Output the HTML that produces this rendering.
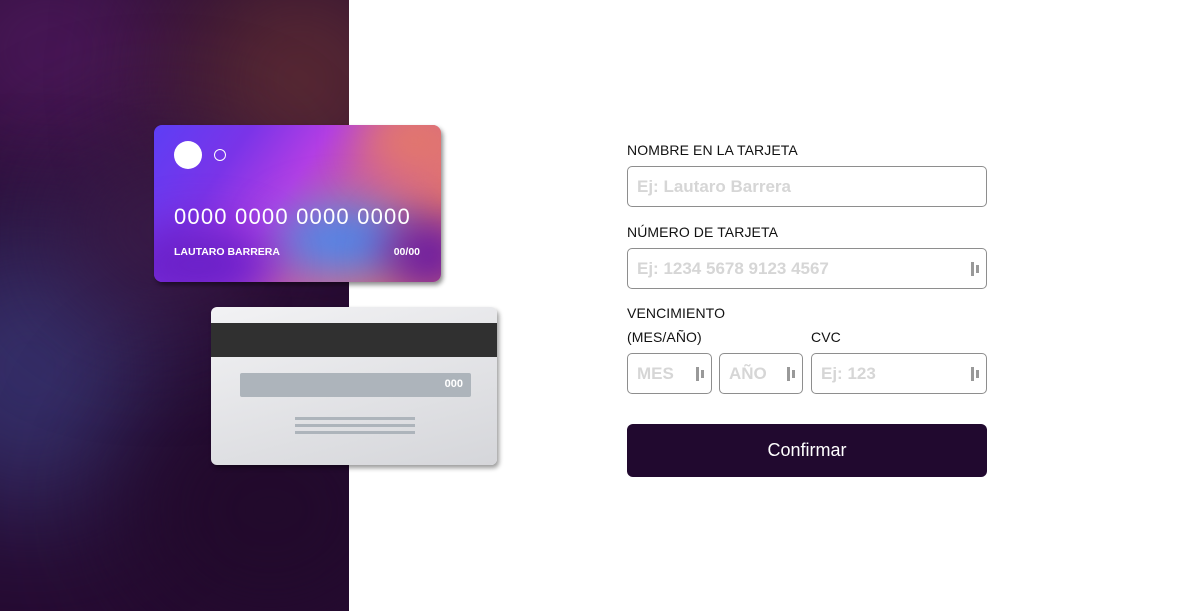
<!DOCTYPE html>
<html><head><meta charset="utf-8"><style>
*{box-sizing:border-box;margin:0;padding:0}
body{width:1178px;height:611px;background:#fff;font-family:"Liberation Sans",sans-serif;position:relative;overflow:hidden}
.left{position:absolute;left:0;top:0;width:349px;height:611px;background:#260b32;overflow:hidden}
.blob{position:absolute;border-radius:50%;filter:blur(60px)}
.front{position:absolute;left:154px;top:125px;width:287px;height:157px;border-radius:8px;overflow:hidden;box-shadow:2px 3px 5px rgba(0,0,0,.45);background:linear-gradient(125deg,#5d3ef5 0%,#7a34e8 25%,#b23ee4 45%,#c85aa8 60%,#e27470 85%)}
.front .g{position:absolute;border-radius:50%;filter:blur(22px)}
.back{position:absolute;left:211px;top:307px;width:286px;height:158px;border-radius:6px;overflow:hidden;box-shadow:2px 3px 5px rgba(0,0,0,.4);background:linear-gradient(165deg,#f2f2f4,#d5d6da)}
label{position:absolute;font-size:14px;color:#111;letter-spacing:.1px;font-weight:500}
.in{position:absolute;border:1px solid #8e8e8e;border-radius:5px;height:41px;font-size:17px;color:#d6d6d6;padding:10px 9px;font-weight:bold}
.ic{position:absolute;right:5px;top:13px;width:10px;height:14px}
.ic i{position:absolute;background:#999;width:3px}
</style></head><body>
<div class="left">
 <div class="blob" style="left:-80px;top:-60px;width:260px;height:220px;background:#4a1858"></div>
 <div class="blob" style="left:180px;top:-40px;width:240px;height:240px;background:#5a2a33"></div>
 <div class="blob" style="left:-100px;top:230px;width:260px;height:280px;background:#35306a"></div>
 <div class="blob" style="left:120px;top:380px;width:300px;height:260px;background:#220a2c"></div>
 <div class="blob" style="left:60px;top:150px;width:200px;height:160px;background:#3d1d4a"></div>
</div>
<div class="front">
 <div class="g" style="left:120px;top:80px;width:140px;height:70px;background:#4f86e8"></div>
 <div class="g" style="left:230px;top:90px;width:90px;height:80px;background:#6a1aa0"></div>
 <div class="g" style="left:-30px;top:100px;width:150px;height:80px;background:#6a20c8"></div>
 <div class="g" style="left:210px;top:-20px;width:100px;height:70px;background:#e3786a"></div>
 <div style="position:absolute;left:20px;top:16px;width:28px;height:28px;border-radius:50%;background:#fff"></div>
 <div style="position:absolute;left:60px;top:24px;width:12px;height:12px;border-radius:50%;border:1px solid #fff"></div>
 <div style="position:absolute;left:20px;top:79px;color:#fff;font-size:22px;letter-spacing:1.2px;font-weight:500">0000 0000 0000 0000</div>
 <div style="position:absolute;left:20px;top:121px;color:#fff;font-size:10.5px;font-weight:bold">LAUTARO BARRERA</div>
 <div style="position:absolute;right:21px;top:121px;color:#fff;font-size:10.5px;font-weight:bold">00/00</div>
</div>
<div class="back">
 <div style="position:absolute;left:0;top:16px;width:100%;height:34px;background:#303030"></div>
 <div style="position:absolute;left:29px;top:66px;width:231px;height:24px;border-radius:2px;background:#adb4bb;color:#fff;font-size:11px;text-align:right;padding:5px 8px;font-weight:bold">000</div>
 <div style="position:absolute;left:84px;top:110px;width:120px;height:3px;background:#adb4bb;box-shadow:0 7px 0 #adb4bb"></div>
 <div style="position:absolute;left:84px;top:124px;width:120px;height:3px;background:#adb4bb"></div>
</div>
<label style="left:627px;top:142px">NOMBRE EN LA TARJETA</label>
<div class="in" style="left:627px;top:166px;width:360px">Ej: Lautaro Barrera</div>
<label style="left:627px;top:224px">NÚMERO DE TARJETA</label>
<div class="in" style="left:627px;top:248px;width:360px">Ej: 1234 5678 9123 4567<span class="ic"><i style="left:0;top:0;height:14px"></i><i style="left:5px;top:3px;height:8px"></i></span></div>
<label style="left:627px;top:305px">VENCIMIENTO</label>
<label style="left:627px;top:329px">(MES/AÑO)</label>
<label style="left:811px;top:329px">CVC</label>
<div class="in" style="left:627px;top:353px;width:85px">MES<span class="ic"><i style="left:0;top:0;height:14px"></i><i style="left:5px;top:3px;height:8px"></i></span></div>
<div class="in" style="left:719px;top:353px;width:84px">AÑO<span class="ic"><i style="left:0;top:0;height:14px"></i><i style="left:5px;top:3px;height:8px"></i></span></div>
<div class="in" style="left:811px;top:353px;width:176px">Ej: 123<span class="ic"><i style="left:0;top:0;height:14px"></i><i style="left:5px;top:3px;height:8px"></i></span></div>
<div style="position:absolute;left:627px;top:424px;width:360px;height:53px;border-radius:6px;background:#21092f;color:#fff;font-size:18px;text-align:center;line-height:53px">Confirmar</div>
</body></html>
